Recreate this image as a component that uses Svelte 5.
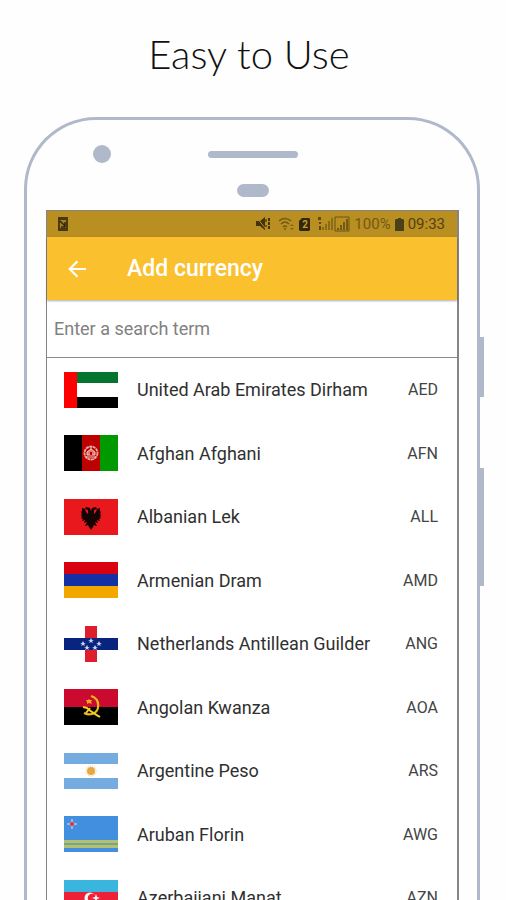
<script lang="ts">
	type Currency = { code: string; name: string };

	const currencies: Currency[] = [
		{ code: 'AED', name: 'United Arab Emirates Dirham' },
		{ code: 'AFN', name: 'Afghan Afghani' },
		{ code: 'ALL', name: 'Albanian Lek' },
		{ code: 'AMD', name: 'Armenian Dram' },
		{ code: 'ANG', name: 'Netherlands Antillean Guilder' },
		{ code: 'AOA', name: 'Angolan Kwanza' },
		{ code: 'ARS', name: 'Argentine Peso' },
		{ code: 'AWG', name: 'Aruban Florin' },
		{ code: 'AZN', name: 'Azerbaijani Manat' }
	];

	let term = $state('');
	let visible = $derived(
		currencies.filter((c) => `${c.name} ${c.code}`.toLowerCase().includes(term.toLowerCase()))
	);
</script>

<svelte:head>
	<title>Easy to Use</title>
</svelte:head>

<main class="page">
	<h1 class="headline">Easy to Use</h1>

	<div class="phone">
		<span class="side-button power"></span>
		<span class="side-button volume"></span>

		<div class="bezel">
			<span class="camera"></span>
			<span class="speaker"></span>
			<span class="sensor"></span>
		</div>

		<section class="screen">
			<div class="status">
				<svg class="note" width="10" height="14" viewBox="0 0 10 14">
					<path d="M0 0h10v14H0z" fill="#4b390c" />
					<path d="M2 3h6v8H2z" fill="#a58125" />
					<path d="M2 4l5 5V5M3 10h4" fill="none" stroke="#33270a" stroke-width="1.5" />
				</svg>
				<svg width="15" height="14" viewBox="0 0 15 14">
					<path d="M0 4h4l5-4v13L4 9H0z" fill="#44340c" />
					<path d="M1 1l9 11" stroke="#b98f22" stroke-width="1" />
					<path d="M10 2v3M10 8v2" stroke="#5a450f" stroke-width="1.5" />
					<path d="M13 1v12" stroke="#44340c" stroke-width="2" stroke-dasharray="3 1" />
				</svg>
				<svg class="wifi" width="16" height="14" viewBox="0 0 16 14">
					<path d="M0 4q6-5 12 0M2 7q4-4 8 0M4 10q2-2 4 0" fill="none" stroke="#735916" stroke-width="1.5" />
					<path d="M5 11h2v2H5zM11 9l2-2 2 2zM11 11h4l-2 2z" fill="#846619" />
				</svg>
				<svg class="sim" width="11" height="13" viewBox="0 0 11 13">
					<path d="M3 0h7l1 1v11l-1 1H1l-1-1V3z" fill="#33270a" />
					<text x="6" y="10" text-anchor="middle" font-size="10" font-weight="700" fill="#c69c2a">2</text>
				</svg>
				<svg class="signal" width="32" height="16" viewBox="0 0 32 16">
					<path d="M0 1h3v3H0zM1 6h2v2H1zM1 10h2v4H1z" fill="#5f4912" />
					<path d="M4 11h2v3H4zM7 8h2v6H7zM10 5h2v9h-2zM13 2h2v12h-2z" fill="#8b6b1b" />
					<path d="M17 1h14v14H17z" fill="none" stroke="#6b5217" />
					<path d="M19 12h2v2h-2zM22 9h2v5h-2zM25 6h2v8h-2zM28 3h2v11h-2z" fill="#735916" />
				</svg>
				<span class="percent">100%</span>
				<svg class="battery" width="9" height="13" viewBox="0 0 9 13">
					<path d="M3 0h3v1h2l1 1v11H0V2l1-1h2z" fill="#4a4018" />
				</svg>
				<span class="time">09:33</span>
			</div>

			<header class="app-bar">
				<button class="back" aria-label="Back">
					<svg width="18" height="18" viewBox="0 0 18 18">
						<path d="M18 9H2M9.500 1.200L1.700 9l7.800 7.800" fill="none" stroke="currentColor" stroke-width="2.200" />
					</svg>
				</button>
				<h2 class="title">Add currency</h2>
			</header>

			<input class="search" type="text" aria-label="Search currencies" placeholder="Enter a search term" bind:value={term} />

			<ul class="list">
				{#each visible as currency (currency.code)}
					<li class="row">
						<svg class="flag" viewBox="0 0 54 36">
							{#if currency.code === 'AED'}
								<path d="M0 0h54v36H0z" fill="#fff" />
								<path d="M13 0h41v11H13z" fill="#04742f" />
								<path d="M13 25h41v11H13z" fill="#000" />
								<path d="M0 0h13v36H0z" fill="#fe0000" />
							{:else if currency.code === 'AFN'}
								<path d="M0 0h18v36H0z" fill="#000" />
								<path d="M18 0h18v36H18z" fill="#bd0000" />
								<path d="M36 0h18v36H36z" fill="#009900" />
								<circle cx="27" cy="18" r="6.500" fill="none" stroke="#e9a9a5" stroke-width="1.800" stroke-dasharray="3 .5" />
								<path d="M23 20v-3l4-3 4 3v3zM22 22h10M27 12v3" fill="#d87972" stroke="#f3c9c6" />
								<path d="M26 17h2v3h-2z" fill="#bd0000" />
							{:else if currency.code === 'ALL'}
								<path d="M0 0h54v36H0z" fill="#e9181c" />
								<path
									d="M27 12l-1-3-4-1-1 2 3 1 0 4-2-2-1-3-3-1 0 3-1 1 1 2-1 1 1 2-1 1 2 1-1 2 3-1-1 3 3-1-2 4 3-1 1 2 2 3 2-3 1-2 3 1-2-4 3 1-1-3 3 1-1-2 2-1-1-1 1-2-1-1 1-2-1-1 0-3-3 1-1 3-2 2 0-4 3-1-1-2-4 1z"
									fill="#160304"
								/>
							{:else if currency.code === 'AMD'}
								<path d="M0 0h54v12H0z" fill="#d90012" />
								<path d="M0 12h54v12H0z" fill="#1330a5" />
								<path d="M0 24h54v12H0z" fill="#f2a800" />
							{:else if currency.code === 'ANG'}
								<path d="M0 0h54v36H0z" fill="#fff" />
								<path d="M21 0h12v36H21z" fill="#dc1e2d" />
								<path d="M0 12h54v12H0z" fill="#08247e" />
								<path
									d="M27 12l1 2h2l-2 1 1 2-2-1-2 1 1-2-2-1h2zM19 15l1 2h2l-2 1 1 2-2-1-2 1 1-2-2-1h2zM35 15l1 2h2l-2 1 1 2-2-1-2 1 1-2-2-1h2zM23 19l1 2h2l-2 1 1 2-2-1-2 1 1-2-2-1h2zM31 19l1 2h2l-2 1 1 2-2-1-2 1 1-2-2-1h2z"
									fill="#cdd6f5"
								/>
							{:else if currency.code === 'AOA'}
								<path d="M0 0h54v18H0z" fill="#cc092f" />
								<path d="M0 18h54v18H0z" fill="#000" />
								<path d="M27 7c10 3 9 16 1 18-3 1-6 0-8-1" fill="none" stroke="#e6ba1c" stroke-width="2.200" />
								<path d="M19 18l4 1c4 4 8 6 13 9M22 24l4-5" fill="none" stroke="#f1cf24" stroke-width="2" />
								<path d="M25 10l1 1 2 0-1 2 1 2-3-1-2 1 0-2-1-2 2 0z" fill="#f5a720" />
							{:else if currency.code === 'ARS'}
								<path d="M0 0h54v36H0z" fill="#fff" />
								<path d="M0 0h54v11H0zM0 25h54v11H0z" fill="#74acdf" />
								<circle cx="27" cy="18" r="4" fill="#e9a83d" />
								<circle cx="27" cy="18" r="5" fill="none" stroke="#efc47c" stroke-dasharray="1 1" />
							{:else if currency.code === 'AWG'}
								<path d="M0 0h54v36H0z" fill="#418fde" />
								<path d="M0 24h54v3H0zM0 29h54v3H0z" fill="#b3c06d" />
								<path d="M0 27h54v2H0z" fill="#78a590" />
								<path d="M8 3l1 4 4 1-4 1-1 4-1-4-4-1 4-1z" fill="#d4334a" stroke="#a9bfe4" />
								<circle cx="8" cy="8" r="2" fill="#d4334a" />
							{:else if currency.code === 'AZN'}
								<path d="M0 0h54v12H0z" fill="#3ab5de" />
								<path d="M0 12h54v12H0z" fill="#ee2038" />
								<path d="M0 24h54v12H0z" fill="#509e2f" />
								<circle cx="26" cy="18" r="5.500" fill="#fff" />
								<circle cx="28" cy="18" r="4.300" fill="#ee2038" />
								<path d="M32 14l1 3 3 1-3 1-1 3-1-3-3-1 3-1z" fill="#fff" />
							{/if}
						</svg>
						<span class="name">{currency.name}</span>
						<span class="code">{currency.code}</span>
					</li>
				{/each}
			</ul>
		</section>
	</div>
</main>

<style>
	:global(body) {
		margin: 0;
		background: #fefefe;
	}

	.page {
		--frame: #b0b9ca;
		height: 100vh;
		overflow: hidden;
		font-family: Roboto, 'Liberation Sans', sans-serif;
		color: #303030;
	}

	.headline {
		margin: 0;
		padding: 30px 8px 0 0;
		height: 87px;
		font-family: Lato, 'Open Sans', sans-serif;
		font-size: 40px;
		font-weight: 300;
		line-height: 48px;
		text-align: center;
		color: #111;
	}

	.phone {
		position: relative;
		margin: 0 26px 0 24px;
		padding: 0 18px 0 19px;
		border: 3px solid var(--frame);
		border-bottom: 0;
		border-radius: 72px 72px 0 0;
	}

	.side-button {
		position: absolute;
		right: -7px;
		width: 4px;
		background: var(--frame);
	}

	.power {
		top: 217px;
		height: 60px;
	}

	.volume {
		top: 348px;
		height: 118px;
	}

	.bezel {
		box-sizing: border-box;
		display: grid;
		grid-template-columns: 1fr 90px 1fr;
		grid-template-rows: 18px 13px;
		row-gap: 21px;
		align-items: center;
		justify-items: center;
		height: 90px;
		padding-top: 25px;
	}

	.camera {
		justify-self: start;
		width: 18px;
		height: 18px;
		margin-left: 47px;
		border-radius: 50%;
		background: var(--frame);
	}

	.speaker {
		width: 90px;
		height: 7px;
		border-radius: 4px;
		background: var(--frame);
	}

	.sensor {
		grid-column: 2;
		grid-row: 2;
		width: 32px;
		height: 13px;
		border-radius: 7px;
		background: var(--frame);
	}

	.screen {
		border: 1px solid #858585;
		border-width: 1px 2px 0 1px;
		background: #fff;
	}

	.status {
		display: flex;
		align-items: center;
		height: 26px;
		padding: 0 12px 0 11px;
		background: #b98f22;
		font-size: 15px;
	}

	.note {
		margin-right: auto;
	}

	.wifi {
		margin-left: 8px;
	}

	.sim {
		margin-left: 4px;
	}

	.signal {
		margin-left: 8px;
	}

	.percent {
		margin-left: 4px;
		color: #735916;
	}

	.battery {
		margin: 0 4px;
	}

	.time {
		color: #54410f;
	}

	.app-bar {
		position: relative;
		display: flex;
		align-items: center;
		height: 63px;
		padding-left: 8px;
		background: #fbc02d;
		box-shadow: 0 1px 2px #0005;
		color: #fff;
	}

	.back {
		display: grid;
		place-items: center;
		width: 44px;
		height: 48px;
		padding: 0;
		border: 0;
		background: none;
		color: inherit;
	}

	.title {
		margin: 0 0 0 28px;
		font-size: 23px;
		font-weight: 500;
		line-height: 32px;
	}

	.search {
		box-sizing: border-box;
		display: block;
		width: 100%;
		height: 58px;
		padding: 0 7px;
		border: 0;
		border-bottom: 1px solid #8b8b8b;
		outline: 0;
		background: none;
		font: inherit;
		font-size: 18px;
	}

	.search::placeholder {
		color: #818181;
		opacity: 1;
	}

	.list {
		display: grid;
		grid-auto-rows: 63px 64px;
		margin: 0;
		padding: 0;
		list-style: none;
	}

	.row {
		display: flex;
		align-items: center;
		padding: 0 19px 0 17px;
	}

	.flag {
		width: 54px;
		height: 36px;
		margin-right: 19px;
		flex: none;
	}

	.name {
		flex: 1;
		font-size: 18px;
		white-space: nowrap;
	}

	.code {
		font-size: 16px;
		color: #444;
	}
</style>
